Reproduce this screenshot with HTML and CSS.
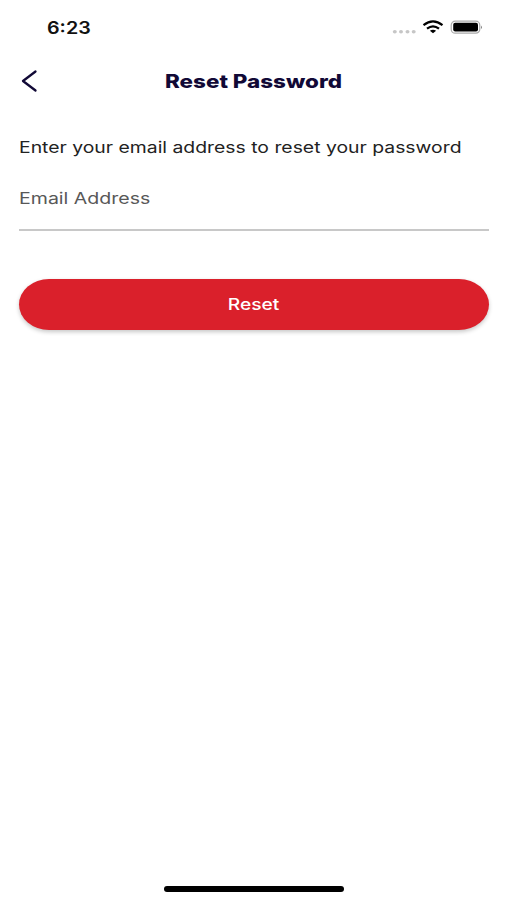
FILE: index.html
```html
<!DOCTYPE html>
<html lang="en">
<head>
<meta charset="utf-8">
<title>Reset Password</title>
<link rel="stylesheet" href="styles.css">
</head>
<body>
<div class="screen">
  <div class="status">
    <span class="time">6:23</span>
    <svg class="indicators" width="92" height="20" viewBox="0 0 92 20">
      <g fill="#c6c6c6"><ellipse cx="4.8" cy="11.8" rx="2" ry="1.7"/><ellipse cx="11" cy="11.8" rx="2" ry="1.7"/><ellipse cx="17.5" cy="11.8" rx="2" ry="1.7"/><ellipse cx="23.7" cy="11.8" rx="2" ry="1.7"/></g>
      <g fill="none" stroke="#000" stroke-width="2.2"><path d="M33.5 5.2Q43 -2.4 52.5 5.2"/><path d="M37 8.7Q43 4 49 8.7"/></g>
      <path d="M39.9 10.8Q43 8.6 46.1 10.8L43 13.2Z"/>
      <rect x="61.2" y="1.2" width="28.6" height="12" rx="4" fill="#fff" stroke="#aaa" stroke-width="1.2"/>
      <rect x="63.2" y="2.8" width="24.8" height="8.8" rx="2"/>
      <path d="M91 5.4Q93 7.2 91 9Z" fill="#888"/>
    </svg>
  </div>
  <header class="header">
    <svg class="back" width="18" height="24" viewBox="0 0 18 24"><path d="M15.5 2.5L3 12L15.5 21.5" fill="none" stroke="#110936" stroke-width="2.3" stroke-linecap="round" stroke-linejoin="round"/></svg>
    <h1 class="title">Reset Password</h1>
  </header>
  <main class="form">
    <p class="hint">Enter your email address to reset your password</p>
    <div class="field"><span class="label">Email Address</span></div>
    <button class="submit"><span class="submit-text">Reset</span></button>
  </main>
  <div class="home"></div>
</div>
</body>
</html>
```
FILE: styles.css
```css
* { box-sizing: border-box; }
body { margin: 0; background: #fff; font-family: Inter, "Liberation Sans", sans-serif; }
.screen { width: 507px; height: 900px; display: flex; flex-direction: column; overflow: hidden; }
.status { height: 54px; padding: 0 25px 0 47px; display: flex; justify-content: space-between; align-items: center; }
.time { margin-top: 1px; font-size: 17px; font-weight: 600; color: #111; transform: scaleX(1.16); transform-origin: left; white-space: nowrap; }
.indicators { margin-top: 6px; }
.header { height: 54px; padding-left: 20px; display: flex; align-items: center; }
.title { margin: 0 0 0 127px; font-size: 18.5px; line-height: 24px; font-weight: 800; color: #110936; white-space: nowrap; transform: scaleX(1.212); transform-origin: left; }
.form { padding: 27px 18px 0 19px; }
.hint { margin: 0; width: max-content; font-size: 16px; line-height: 24px; color: #222; transform: scaleX(1.21); transform-origin: left; }
.field { height: 72px; padding-top: 27px; border-bottom: 2px solid #c8c8c8; }
.label { display: block; width: max-content; font-size: 16px; line-height: 24px; color: #585858; transform: scaleX(1.222); transform-origin: left; }
.submit { display: flex; align-items: center; justify-content: center; width: 100%; height: 51px; margin-top: 48px; padding: 0 0 1px; border: 0; border-radius: 30px / 25.5px; background: #da202b; color: #fff; box-shadow: 0 2px 4px rgba(0,0,0,.22); font: 500 16px/24px Inter, "Liberation Sans", sans-serif; }
.submit-text { transform: scaleX(1.2); }
.home { width: 180px; height: 6px; margin: auto auto 8px 164px; border-radius: 3px; background: #000; }
```
